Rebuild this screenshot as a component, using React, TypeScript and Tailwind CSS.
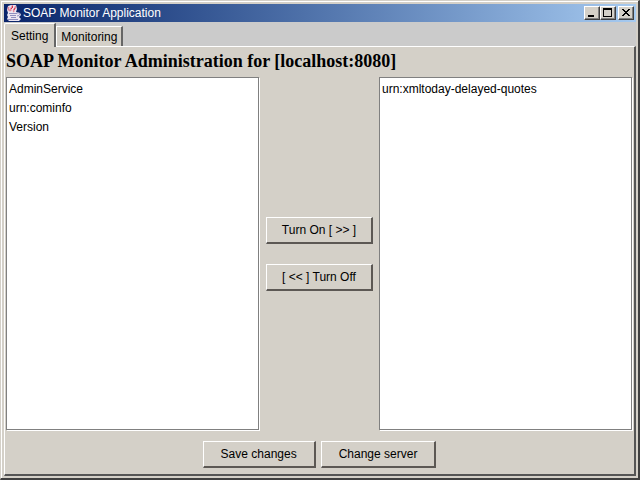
import React from "react";

const UI_FONT = "font-['Liberation_Sans',Arial,sans-serif]";

const JavaCup = () => (
  <svg viewBox="0 0 16 16" className="h-4 w-4 shrink-0" aria-hidden="true">
    <path d="M2 1l3-1h5l1 4-1 3 4 1 1 2-2 2 2 2-2 2H3l-2-2 1-2-1-2 1-2-1-3z" fill="#ece6f2" />
    <path
      d="M6 0c2 2-3 3-1 6M9 1c2 2-3 3-1 6M3 2c-2 2 1 3 0 4"
      stroke="#e58a9c"
      strokeWidth="1.6"
      fill="none"
    />
    <path d="M6 1l1 1-2 2M9 3L8 5" stroke="#d2304f" fill="none" />
    <path d="M3 8h8v1H3zM4 10h6v1H4zM5 12h5v1H5zM2 14h10v1H2z" fill="#9090c0" />
    <path d="M11 8c4-1 3 3 0 3" stroke="#9090c0" fill="none" />
  </svg>
);

const WindowButton = ({ label, children }: any) => (
  <button
    type="button"
    aria-label={label}
    className="h-[14px] w-4 border border-t-white border-l-white border-r-[#404040] border-b-[#404040] bg-[#d4d0c8] shadow-[inset_-1px_-1px_0_#808080]"
  >
    <svg viewBox="0 0 14 12" className="h-3 w-[14px]" shapeRendering="crispEdges" aria-hidden="true">
      {children}
    </svg>
  </button>
);

const TitleBar = () => (
  <header className="flex h-[18px] items-center bg-linear-to-r from-[#0a246a] to-[#a6caf0] px-[2px]">
    <JavaCup />
    <h1 className="ml-px flex-1 text-[12px] leading-4 text-white">SOAP Monitor Application</h1>
    <div className="flex">
      <WindowButton label="Minimize">
        <path d="M3 8h6v2H3z" />
      </WindowButton>
      <WindowButton label="Maximize">
        <path d="M2 1h9v9H2zM3 3v6h7V3z" fillRule="evenodd" />
      </WindowButton>
      <div className="ml-[2px] flex">
        <WindowButton label="Close">
          <path d="M3 2h2v1h1v1h2V3h1V2h2v1h-1v1H9v1H8v1h1v1h1v1h1v1H9V8H8V7H6v1H5v1H3V8h1V7h1V6h1V5H5V4H4V3H3z" />
        </WindowButton>
      </div>
    </div>
  </header>
);

const Tabs = () => (
  <nav role="tablist" className="flex h-6 items-end bg-[#cbcbcb]">
    <button
      type="button"
      role="tab"
      aria-selected="true"
      className="relative z-10 -mb-px h-6 rounded-tl-xs border-t border-l border-white border-r-2 border-r-[#666] bg-[#d4d0c8] px-[6px]"
    >
      Setting
    </button>
    <button
      type="button"
      role="tab"
      aria-selected="false"
      className="h-5 border-t border-l border-white border-r-2 border-r-[#666] bg-[#d4d0c8] px-1 pt-px"
    >
      Monitoring
    </button>
  </nav>
);

const ServiceList = ({ label, items }: any) => (
  <select
    multiple
    aria-label={label}
    className="min-w-0 flex-1 overflow-auto border border-[#808080] bg-white p-px shadow-[1px_1px_0_#fff] outline-none"
  >
    {items.map((item: string) => (
      <option key={item} className="h-[19px] px-px pt-[3px] pb-0 text-[12px] leading-4">
        {item}
      </option>
    ))}
  </select>
);

const Button = ({ className, children }: any) => (
  <button
    type="button"
    className={`h-[27px] border border-t-white border-l-white border-r-2 border-b-2 border-r-[#5c5854] border-b-[#5c5854] bg-[#d4d0c8] whitespace-nowrap ${className}`}
  >
    {children}
  </button>
);

export default function App() {
  return (
    <div
      className={`flex h-screen flex-col border-t border-l border-r-2 border-b-2 border-t-[#d4d0c8] border-l-[#d4d0c8] border-r-[#404040] border-b-[#404040] bg-[#d4d0c8] text-[12px] text-black ${UI_FONT}`}
    >
      <div className="flex min-h-0 flex-1 flex-col border-t border-l border-white p-[2px]">
        <TitleBar />
        <Tabs />
        <main className="flex min-h-0 flex-1 flex-col border-t border-l border-r-2 border-b-2 border-t-white border-l-white border-r-[#555] border-b-[#555] px-px">
          <h2 className="pt-[3px] pb-[5px] font-['Liberation_Serif','Times_New_Roman',serif] text-[18px] leading-[22px] font-bold">
            SOAP Monitor Administration for [localhost:8080]
          </h2>
          <div className="flex min-h-0 flex-1 pr-px">
            <ServiceList label="Available services" items={["AdminService", "urn:cominfo", "Version"]} />
            <div className="flex w-[120px] flex-col items-stretch justify-center gap-5 pr-[6px] pl-[7px]">
              <Button className="px-2">Turn On [ &gt;&gt; ]</Button>
              <Button className="px-2">[ &lt;&lt; ] Turn Off</Button>
            </div>
            <ServiceList label="Monitored services" items={["urn:xmltoday-delayed-quotes"]} />
          </div>
          <div className="flex justify-center gap-[5px] pt-[11px] pb-[6px]">
            <Button className="px-[17px]">Save changes</Button>
            <Button className="px-[17px]">Change server</Button>
          </div>
        </main>
      </div>
    </div>
  );
}
